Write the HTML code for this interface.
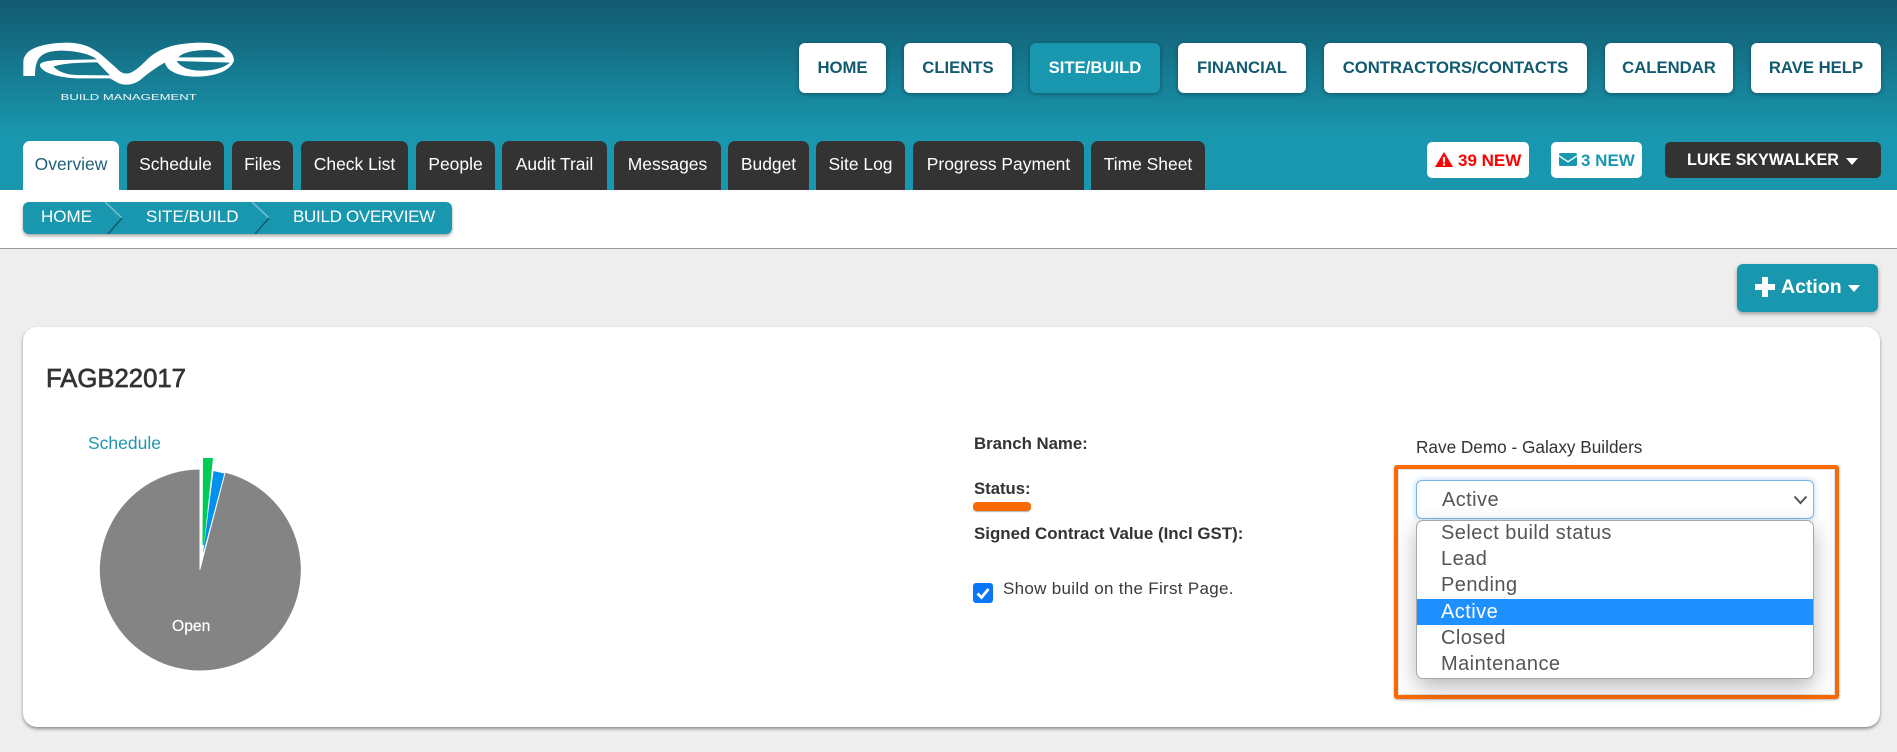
<!DOCTYPE html>
<html lang="en"><head><meta charset="utf-8"><title>Build Overview</title>
<style>
*{box-sizing:border-box}
html,body{margin:0;padding:0;width:1897px;height:752px;overflow:hidden;background:#eee;font-family:"Liberation Sans",sans-serif;color:#333}
.a{position:absolute}
.t{position:absolute;white-space:nowrap;line-height:1}
#hdr{left:0;top:0;width:1897px;height:190px;background:linear-gradient(180deg,#125a70 0,#1997ae 135px,#1997ae 190px)}
#wb{left:0;top:190px;width:1897px;height:59px;background:#fff;border-bottom:1px solid #9a9a9a}
.nav{position:absolute;top:43px;height:50px;background:#fff;border-radius:6px;box-shadow:0 1px 5px rgba(0,0,0,.35);color:#125a70;font-weight:700;font-size:16.7px;display:flex;align-items:center;justify-content:center;white-space:nowrap}
.nav.on{background:#1997ae;color:#fff}
.tab{position:absolute;top:141px;height:49px;background:#333;border-radius:7px 7px 0 0;color:#fff;font-size:17.45px;display:flex;align-items:center;justify-content:center;white-space:nowrap;padding-bottom:2px}
.tab.on{background:#fff;color:#1f5f78}
.bad{position:absolute;top:142px;height:36px;border-radius:5px;background:#fff}
.opt{position:absolute;left:1417px;width:396px;height:26px;font-size:20px;letter-spacing:.45px;line-height:26px;color:#555;padding-left:24px;white-space:nowrap}
</style></head><body>
<div id="hdr" class="a"></div>
<div id="wb" class="a"></div>

<svg class="a" style="left:0;top:0" width="480" height="120" viewBox="0 0 1440 360">
<path fill="#fff" fill-rule="evenodd" d="M70 228L70 185C72 150 115 130 200 128C250 128 280 145 305 165L350 205C362 218 372 222 385 220C400 218 420 200 445 175C480 145 520 130 600 128C660 128 700 145 702 182C690 215 640 230 590 230C540 230 500 215 495 188C480 195 455 212 430 232C410 250 395 254 375 254C355 252 345 243 330 235L230 235C170 233 120 215 120 195C120 185 150 180 190 180L290 178C275 165 235 152 180 152C125 155 105 170 105 228ZM160 200C180 190 250 187 292 187L330 226L230 225C200 225 175 215 160 200ZM535 172C550 155 590 150 625 150C650 150 668 160 676 172ZM530 183L690 188C670 205 640 212 605 212C565 212 540 200 530 183Z"/>
<text x="182" y="300" fill="#f2f8fa" font-family="Liberation Sans" font-size="25" textLength="408" lengthAdjust="spacingAndGlyphs">BUILD MANAGEMENT</text>
</svg>

<div class="nav" style="left:799px;width:87px">HOME</div>
<div class="nav" style="left:904px;width:108px">CLIENTS</div>
<div class="nav on" style="left:1030px;width:130px">SITE/BUILD</div>
<div class="nav" style="left:1178px;width:128px">FINANCIAL</div>
<div class="nav" style="left:1324px;width:263px">CONTRACTORS/CONTACTS</div>
<div class="nav" style="left:1605px;width:128px">CALENDAR</div>
<div class="nav" style="left:1751px;width:130px">RAVE HELP</div>

<div class="tab on" style="left:23px;width:96px">Overview</div>
<div class="tab" style="left:127px;width:97px">Schedule</div>
<div class="tab" style="left:232px;width:61px">Files</div>
<div class="tab" style="left:301px;width:107px">Check List</div>
<div class="tab" style="left:416px;width:79px">People</div>
<div class="tab" style="left:502px;width:105px">Audit Trail</div>
<div class="tab" style="left:614px;width:107px">Messages</div>
<div class="tab" style="left:728px;width:81px">Budget</div>
<div class="tab" style="left:816px;width:89px">Site Log</div>
<div class="tab" style="left:913px;width:171px">Progress Payment</div>
<div class="tab" style="left:1091px;width:114px">Time Sheet</div>

<div class="bad" style="left:1427px;width:102px"></div>
<svg class="a" style="left:1435px;top:152px" width="18" height="15" viewBox="0 0 18 15"><path fill="#f00" d="M9 0L18 15H0Z"/><path fill="#fff" d="M7.900 5h2.200v5.500H7.900zM7.900 11.500h2.200v2H7.900z"/></svg>
<div class="t" style="left:1458px;top:152px;font-size:17px;font-weight:700;color:#f00">39 NEW</div>
<div class="bad" style="left:1551px;width:91px"></div>
<svg class="a" style="left:1559px;top:153px" width="18" height="13" viewBox="0 0 18 13"><path fill="#1997ae" d="M1.500 0H16.500A1.500 1.500 0 0 1 18 1.500V2L9 8 0 2V1.500A1.500 1.500 0 0 1 1.500 0ZM0 3.600L9 9.600 18 3.600V11.500A1.500 1.500 0 0 1 16.500 13H1.500A1.500 1.500 0 0 1 0 11.500Z"/></svg>
<div class="t" style="left:1581px;top:152px;font-size:17px;font-weight:700;color:#1997ae">3 NEW</div>
<div class="bad" style="left:1665px;width:216px;background:#333"></div>
<div class="t" style="left:1687px;top:152px;font-size:16.2px;font-weight:700;color:#fff">LUKE SKYWALKER</div>
<svg class="a" style="left:1846px;top:158px" width="12" height="7"><path fill="#fff" d="M0 0H12L6 7Z"/></svg>

<div class="a" style="left:23px;top:202px;width:429px;height:32px;background:#1997ae;border-radius:6px;box-shadow:0 2px 3px rgba(0,0,0,.35)"></div>
<svg class="a" style="left:100px;top:202px" width="180" height="32" fill="none" stroke-width="1.5"><path stroke="#7cc0cf" d="M5 0L22 16"/><path stroke="#125a70" d="M22 16L8 32"/><path stroke="#7cc0cf" d="M152 0L169 16"/><path stroke="#125a70" d="M169 16L155 32"/></svg>
<div class="t" style="left:41px;top:208px;font-size:17px;color:#fff">HOME</div>
<div class="t" style="left:146px;top:208px;font-size:17px;color:#fff">SITE/BUILD</div>
<div class="t" style="left:293px;top:208px;font-size:17px;letter-spacing:-.3px;color:#fff">BUILD OVERVIEW</div>

<div class="a" style="left:1737px;top:264px;width:141px;height:48px;background:#1997ae;border-radius:6px;box-shadow:0 2px 4px rgba(0,0,0,.35)"></div>
<svg class="a" style="left:1755px;top:277px" width="20" height="20"><path fill="#fff" d="M7 0h6v7h7v6h-7v7H7v-7H0V7h7Z"/></svg>
<div class="t" style="left:1781px;top:278px;font-size:19.5px;font-weight:700;color:#fff">Action</div>
<svg class="a" style="left:1848px;top:285px" width="12" height="7"><path fill="#fff" d="M0 0H12L6 7Z"/></svg>

<div class="a" style="left:23px;top:327px;width:1857px;height:400px;background:#fff;border-radius:14px;box-shadow:0 2px 3px rgba(0,0,0,.4)"></div>
<div class="t" style="left:46px;top:367px;font-size:25.7px;color:#333;-webkit-text-stroke:.7px #333">FAGB22017</div>
<div class="t" style="left:88px;top:435px;font-size:17.5px;color:#1f97ad">Schedule</div>

<svg class="a" style="left:90px;top:450px" width="220" height="230" viewBox="90 450 220 230">
<path fill="#848484" d="M200.200 570L225.500 472.700A100.500 100.500 0 1 1 199.500 469.500V570Z"/>
<path fill="#0090f0" d="M203 554L213.500 471L224.300 473.500Z"/>
<path fill="#00cc55" d="M202.500 545L203 458H213L204 545Z"/>
</svg>
<div class="t" style="left:172px;top:619px;font-size:15.7px;color:#fff;-webkit-text-stroke:.2px #fff">Open</div>

<div class="t" style="left:974px;top:436px;font-size:16.8px;font-weight:700">Branch Name:</div>
<div class="t" style="left:974px;top:481px;font-size:16.7px;font-weight:700">Status:</div>
<div class="a" style="left:973px;top:502px;width:58px;height:9px;background:#f96a05;border-radius:4px;box-shadow:0 1px 1px rgba(0,0,0,.3)"></div>
<div class="t" style="left:974px;top:526px;font-size:16.9px;font-weight:700">Signed Contract Value (Incl GST):</div>
<svg class="a" style="left:973px;top:583px" width="20" height="20"><rect width="20" height="20" rx="3" fill="#0b76f5"/><path d="M4.500 10.500L8.500 14.500L15.500 6" fill="none" stroke="#fff" stroke-width="2.8"/></svg>
<div class="t" style="left:1003px;top:580px;font-size:17px;letter-spacing:.3px;color:#3a3a3a">Show build on the First Page.</div>
<div class="t" style="left:1416px;top:439px;font-size:17.2px;color:#333">Rave Demo - Galaxy Builders</div>

<div class="a" style="left:1394px;top:465px;width:445px;height:234px;border:4px solid #f96a05;border-radius:3px;box-shadow:0 1px 2px rgba(0,0,0,.3), inset 0 0 0 1px rgba(0,0,0,.12)"></div>
<div class="a" style="left:1416px;top:480px;width:398px;height:39px;background:#fff;border:1px solid #7bb6e8;border-radius:6px;box-shadow:0 0 5px 1px rgba(120,185,240,.45)"></div>
<div class="t" style="left:1442px;top:490px;font-size:20px;letter-spacing:.42px;color:#555">Active</div>
<svg class="a" style="left:1793px;top:495px" width="15" height="10" fill="none"><path d="M1.500 1.500L7.500 8L13.500 1.500" stroke="#555" stroke-width="2"/></svg>
<div class="a" style="left:1416px;top:520px;width:398px;height:159px;background:#fff;border:1px solid #a8a8a8;border-radius:7px;box-shadow:0 8px 22px rgba(0,0,0,.28)"></div>
<div class="opt" style="top:520px">Select build status</div>
<div class="opt" style="top:546px">Lead</div>
<div class="opt" style="top:572px">Pending</div>
<div class="opt" style="top:599px;background:#1e90ff;color:#fff">Active</div>
<div class="opt" style="top:625px">Closed</div>
<div class="opt" style="top:651px">Maintenance</div>
</body></html>
